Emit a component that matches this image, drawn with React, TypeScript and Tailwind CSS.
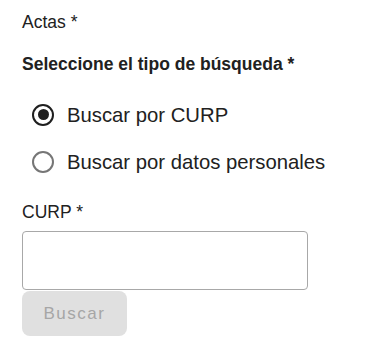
import { useState } from 'react';

const OPTIONS = [
  { key: 'curp', label: 'Buscar por CURP' },
  { key: 'datos', label: 'Buscar por datos personales' },
];

function RadioDot({ checked }: { checked: boolean }) {
  return (
    <span
      className={
        checked
          ? 'flex h-[22px] w-[22px] items-center justify-center rounded-full border-2 border-[#1f1f1f]'
          : 'flex h-[22px] w-[22px] items-center justify-center rounded-full border-2 border-[#767676]'
      }
    >
      {checked && <span className="h-[11px] w-[11px] rounded-full bg-[#1f1f1f]" />}
    </span>
  );
}

export default function App() {
  const [tipo, setTipo] = useState('curp');
  const [curp, setCurp] = useState('');

  return (
    <div className="min-h-screen bg-white pl-[22px] pt-[10px] font-['Liberation_Sans',Arial,sans-serif] text-[#212121]">
      <p className="text-[17.5px] leading-6">Actas *</p>

      <p className="mt-[18px] text-[17.5px] font-bold leading-6">Seleccione el tipo de búsqueda *</p>

      {/* Radio group */}
      <div className="mt-[15px] flex flex-col">
        {OPTIONS.map(o => (
          <label key={o.key} className="flex h-[47px] cursor-pointer items-center">
            <input
              type="radio"
              name="tipo"
              className="sr-only"
              checked={tipo === o.key}
              onChange={() => setTipo(o.key)}
            />
            <span className="ml-[10px]">
              <RadioDot checked={tipo === o.key} />
            </span>
            <span className="ml-[13px] text-[20.3px] leading-6">{o.label}</span>
          </label>
        ))}
      </div>

      <p className="mt-[15px] text-[17.5px] leading-6">CURP *</p>

      <input
        value={curp}
        onChange={e => setCurp(e.target.value)}
        className="mt-[7px] block h-[59px] w-[286px] rounded-[4px] border border-[#a8a8a8] px-3 text-[18px] outline-none"
      />

      <button
        disabled
        className="mt-[1px] block h-[45px] w-[105px] rounded-[8px] bg-[#e0e0e0] text-[17px] tracking-[1.5px] text-[#a6a6a6]"
      >
        Buscar
      </button>
    </div>
  );
}
